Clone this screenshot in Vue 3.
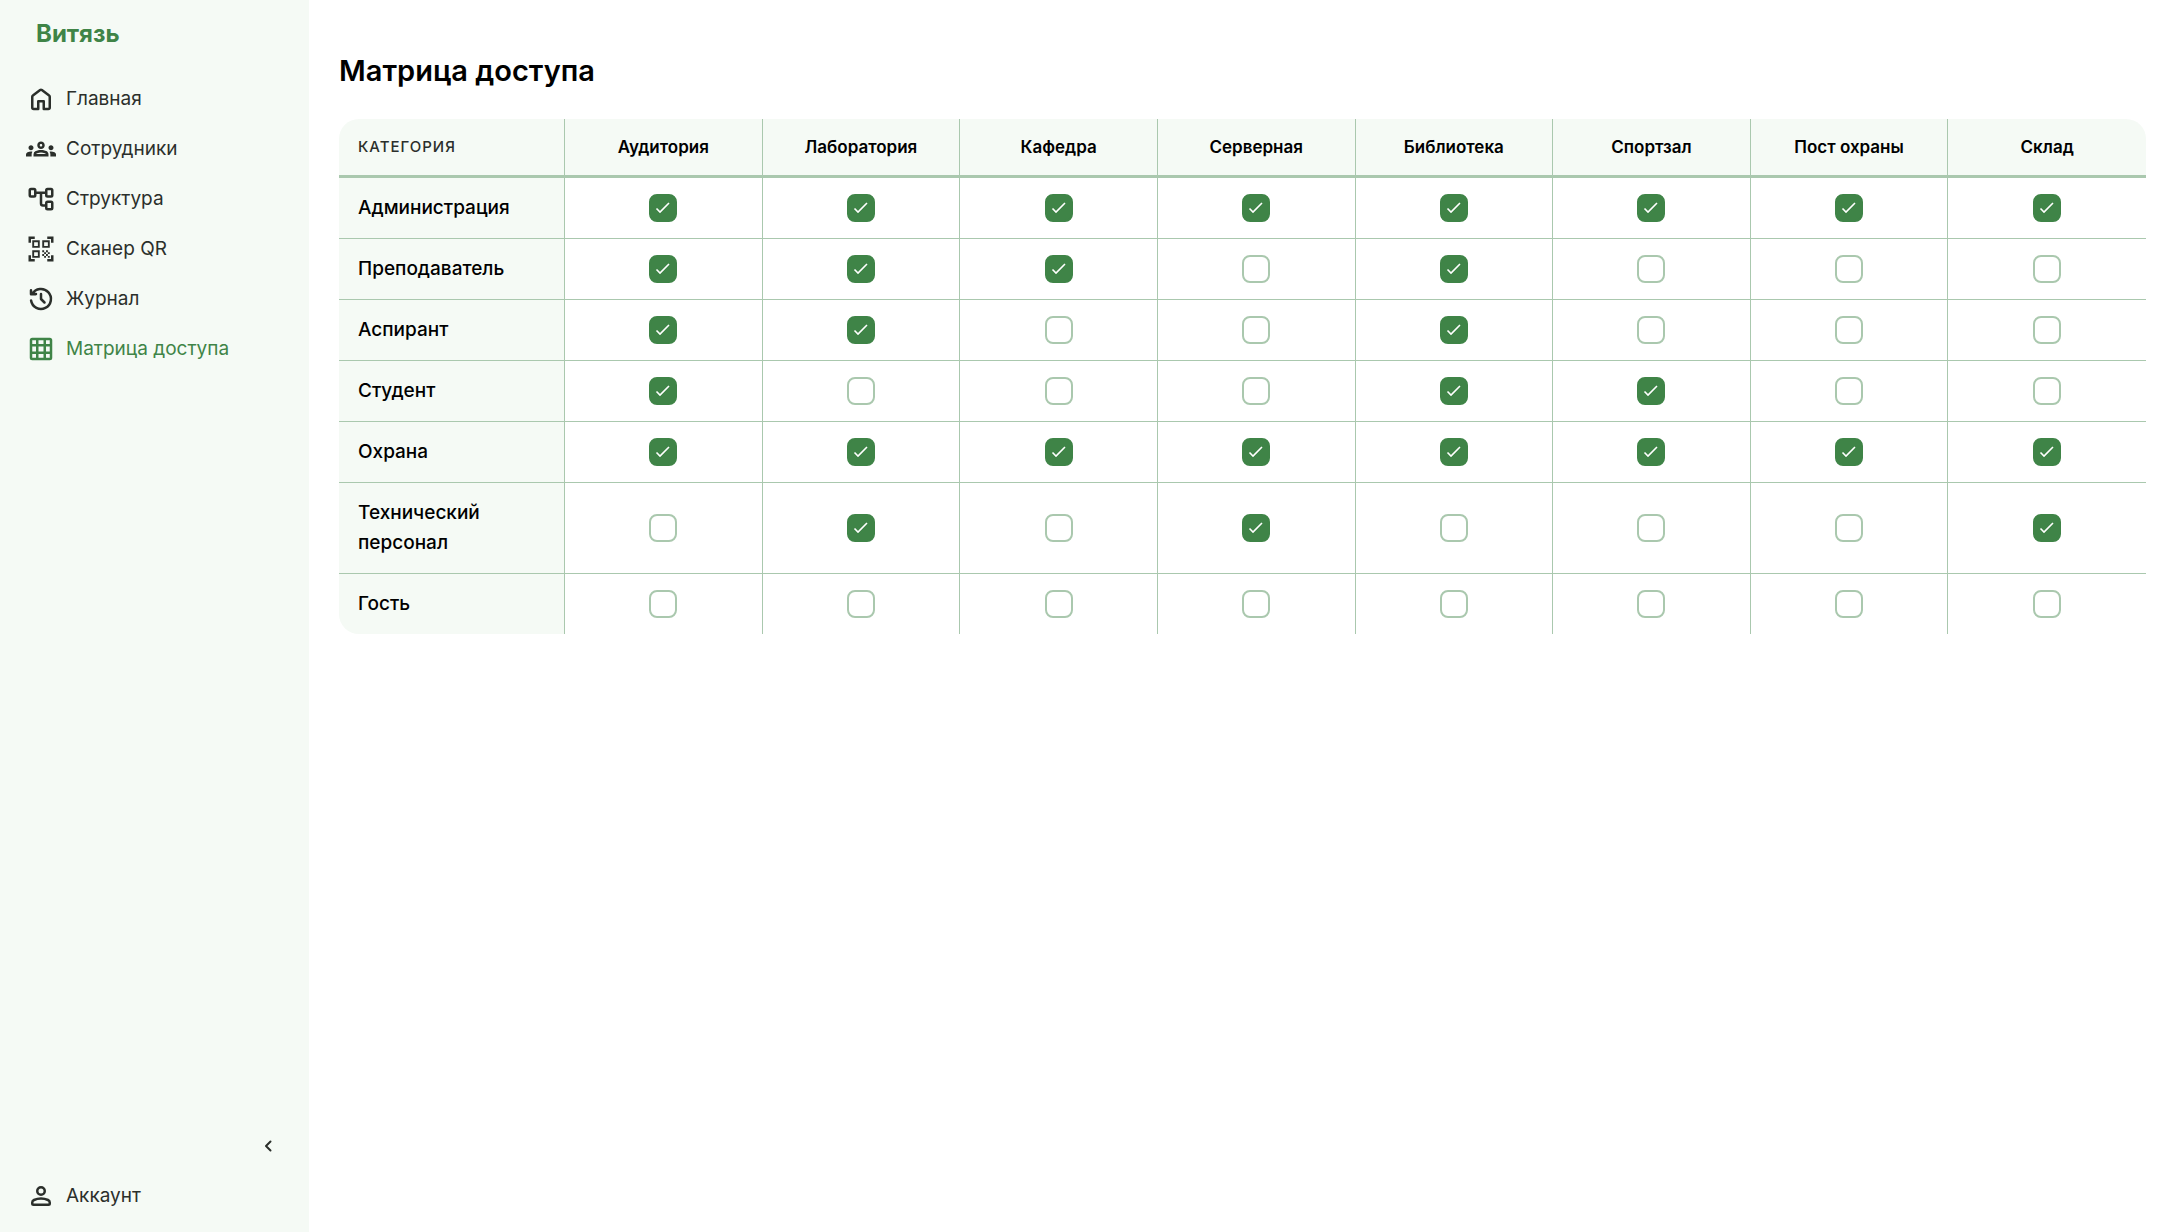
<template>
  <div class="layout">
    <aside class="sidebar">
      <div class="brand">Витязь</div>
      <nav class="menu">
        <a
          v-for="item in menu"
          :key="item.icon"
          href="#"
          class="menu-item"
          :class="{ active: item.icon === activeItem }"
          @click.prevent="activeItem = item.icon"
        >
          <svg class="icon" viewBox="0 0 24 24" aria-hidden="true">
            <path v-if="icons[item.icon].fill" :d="icons[item.icon].fill" fill="currentColor" />
            <path v-if="icons[item.icon].line" :d="icons[item.icon].line" class="line" />
          </svg>
          <span>{{ item.title }}</span>
        </a>
      </nav>
      <button class="collapse-btn" type="button" aria-label="Свернуть меню">
        <svg class="chevron" viewBox="0 0 24 24" aria-hidden="true">
          <path d="M14.5 7.5 10 12l4.5 4.5" class="line" />
        </svg>
      </button>
      <a href="#" class="menu-item" @click.prevent>
        <svg class="icon" viewBox="0 0 24 24" aria-hidden="true">
          <circle cx="12" cy="8" r="3" class="line" />
          <path :d="icons.account.line" class="line" />
        </svg>
        <span>Аккаунт</span>
      </a>
    </aside>

    <main class="content">
      <h1 class="title">Матрица доступа</h1>
      <table class="matrix">
        <thead>
          <tr>
            <th class="corner" scope="col">Категория</th>
            <th v-for="room in rooms" :key="room" scope="col">{{ room }}</th>
          </tr>
        </thead>
        <tbody>
          <tr v-for="row in rows" :key="row.name">
            <th class="category" scope="row">{{ row.name }}</th>
            <td v-for="(room, i) in rooms" :key="room">
              <input
                v-model="row.access[i]"
                type="checkbox"
                class="check"
                :aria-label="`${row.name}: ${room}`"
              />
            </td>
          </tr>
        </tbody>
      </table>
    </main>
  </div>
</template>

<script setup>
import { ref } from 'vue'

const icons = {
  home: {
    line: 'M5 10.2v8.6c0 .7.5 1.2 1.2 1.2H9.8v-6.2h4.4V20h3.6c.7 0 1.2-.5 1.2-1.2v-8.6c0-.4-.2-.8-.5-1L12.7 4.8c-.4-.3-1-.3-1.4 0L5.5 9.2c-.3.2-.5.6-.5 1z'
  },
  staff: {
    fill: 'M4 13c1.1 0 2-.9 2-2s-.9-2-2-2-2 .9-2 2 .9 2 2 2zm1.13 1.1c-.37-.06-.74-.1-1.13-.1-.99 0-1.93.21-2.78.58A2.01 2.01 0 0 0 0 16.43V18h4.5v-1.61c0-.83.23-1.61.63-2.29zM20 13c1.1 0 2-.9 2-2s-.9-2-2-2-2 .9-2 2 .9 2 2 2zm4 3.43c0-.81-.48-1.53-1.22-1.85A6.95 6.95 0 0 0 20 14c-.39 0-.76.04-1.13.1.4.68.63 1.46.63 2.29V18H24v-1.57zm-7.76-2.78C15.07 13.13 13.63 12.75 12 12.75s-3.07.39-4.24.9A2.988 2.988 0 0 0 6 16.39V18h12v-1.61c0-1.18-.68-2.26-1.76-2.74zM8.07 16c.09-.23.13-.39.91-.69.97-.38 1.99-.56 3.02-.56s2.05.18 3.02.56c.77.3.81.46.91.69H8.07zM12 8c.55 0 1 .45 1 1s-.45 1-1 1-1-.45-1-1 .45-1 1-1m0-2c-1.66 0-3 1.34-3 3s1.34 3 3 3 3-1.34 3-3-1.34-3-3-3z'
  },
  structure: {
    line: 'M4 4h2.4a1 1 0 0 1 1 1v4a1 1 0 0 1-1 1H4a1 1 0 0 1-1-1V5a1 1 0 0 1 1-1zM17.2 4H20a1 1 0 0 1 1 1v4a1 1 0 0 1-1 1h-2.8a1 1 0 0 1-1-1V5a1 1 0 0 1 1-1zM17.2 14.2H20a1 1 0 0 1 1 1v4a1 1 0 0 1-1 1h-2.8a1 1 0 0 1-1-1v-4a1 1 0 0 1 1-1zM7.4 7h8.8M12 7v8.6c0 1 .6 1.6 1.6 1.6h2.6'
  },
  qr: {
    fill: 'M9.5 6.5v3h-3v-3h3M11 5H5v6h6V5zm-1.5 9.5v3h-3v-3h3M11 13H5v6h6v-6zm6.5-6.5v3h-3v-3h3M19 5h-6v6h6V5zm-6 8h1.5v1.5H13V13zm1.5 1.5H16V16h-1.5v-1.5zM16 13h1.5v1.5H16V13zm-3 3h1.5v1.5H13V16zm1.5 1.5H16V19h-1.5v-1.5zM16 16h1.5v1.5H16V16zm1.5-1.5H19V16h-1.5v-1.5zm0 3H19V19h-1.5v-1.5zM22 7h-2V4h-3V2h5v5zm0 15v-5h-2v3h-3v2h5zM2 22h5v-2H4v-3H2v5zM2 2v5h2V4h3V2H2z'
  },
  history: {
    line: 'M4.06 13.2A8 8 0 1 0 5 8h3M4 5v3.2h3.6M12 8v4l2.8 2.8'
  },
  matrix: {
    line: 'M5 4h14a1 1 0 0 1 1 1v14a1 1 0 0 1-1 1H5a1 1 0 0 1-1-1V5a1 1 0 0 1 1-1zM9 4v16M15 4v16M4 9h16M4 15h16'
  },
  account: {
    line: 'M5 17.2c0-.9.5-1.6 1.4-2C8.1 14.4 10 14 12 14s3.9.4 5.6 1.2c.9.4 1.4 1.1 1.4 2V18c0 .6-.4 1-1 1H6c-.6 0-1-.4-1-1z'
  }
}

const menu = [
  { icon: 'home', title: 'Главная' },
  { icon: 'staff', title: 'Сотрудники' },
  { icon: 'structure', title: 'Структура' },
  { icon: 'qr', title: 'Сканер QR' },
  { icon: 'history', title: 'Журнал' },
  { icon: 'matrix', title: 'Матрица доступа' }
]
const activeItem = ref('matrix')

const rooms = [
  'Аудитория',
  'Лаборатория',
  'Кафедра',
  'Серверная',
  'Библиотека',
  'Спортзал',
  'Пост охраны',
  'Склад'
]

const toAccess = (mask) => [...mask].map((c) => c === '1')

const rows = ref([
  { name: 'Администрация', access: toAccess('11111111') },
  { name: 'Преподаватель', access: toAccess('11101000') },
  { name: 'Аспирант', access: toAccess('11001000') },
  { name: 'Студент', access: toAccess('10001100') },
  { name: 'Охрана', access: toAccess('11111111') },
  { name: 'Технический персонал', access: toAccess('01010001') },
  { name: 'Гость', access: toAccess('00000000') }
])
</script>

<style>
body {
  margin: 0;
  background: #fff;
}
</style>

<style scoped>
.layout {
  display: flex;
  min-height: 100vh;
  font-family: Inter, 'Noto Sans', sans-serif;
  font-size: 19px;
  line-height: 30px;
  color: #000;
}
.sidebar {
  display: flex;
  flex-direction: column;
  flex: 0 0 309px;
  box-sizing: border-box;
  padding: 19px 26px 11px;
  background: #f5faf5;
  color: #2b2f2b;
}
.brand {
  padding-left: 10px;
  margin-bottom: 25px;
  font-size: 24px;
  font-weight: 700;
  color: #3f8447;
}
.menu {
  display: flex;
  flex-direction: column;
  margin-bottom: auto;
}
.menu-item {
  display: flex;
  align-items: center;
  gap: 10px;
  height: 50px;
  color: inherit;
  text-decoration: none;
}
.menu-item.active {
  color: #3f8447;
}
.icon {
  flex: none;
  width: 30px;
  height: 30px;
}
.line {
  fill: none;
  stroke: currentColor;
  stroke-width: 2;
  stroke-linecap: round;
  stroke-linejoin: round;
}
.collapse-btn {
  display: flex;
  align-items: center;
  justify-content: center;
  align-self: flex-end;
  width: 30px;
  height: 50px;
  padding: 0;
  border: none;
  background: none;
  color: inherit;
  cursor: pointer;
}
.chevron {
  width: 24px;
  height: 24px;
}
.content {
  flex: 1;
  min-width: 0;
  padding: 51px 22px 30px 30px;
}
.title {
  margin: 0 0 28px;
  font-size: 29px;
  line-height: 40px;
  font-weight: 600;
}
.matrix {
  width: 100%;
  table-layout: fixed;
  border-collapse: separate;
  border-spacing: 0;
  border-radius: 20px;
  overflow: hidden;
}
.matrix th,
.matrix td {
  box-sizing: border-box;
  padding: 15px 19px;
  border-right: 1px solid #aac8ae;
  border-bottom: 1px solid #aac8ae;
  text-align: center;
  vertical-align: middle;
}
.matrix th:last-child,
.matrix td:last-child {
  border-right: none;
}
.matrix tbody tr:last-child > * {
  border-bottom: none;
}
.matrix thead th {
  padding: 13px 10px;
  border-bottom-width: 3px;
  background: #f5faf5;
  font-size: 17px;
  font-weight: 600;
}
.matrix thead .corner {
  width: 226px;
  padding-left: 19px;
  color: #2b2f2b;
  font-size: 15px;
  font-weight: 500;
  letter-spacing: 1px;
  text-align: left;
  text-transform: uppercase;
}
.matrix .category {
  background: #f5faf5;
  font-weight: 500;
  text-align: left;
}
.check {
  display: block;
  appearance: none;
  box-sizing: border-box;
  width: 28px;
  height: 28px;
  margin: 0 auto;
  border: 2px solid #aac8ae;
  border-radius: 8px;
  background: #fff;
  cursor: pointer;
}
.check:checked {
  border-color: #3f8447;
  background: #3f8447
    url("data:image/svg+xml,%3Csvg xmlns='http://www.w3.org/2000/svg' viewBox='0 0 24 24' fill='none' stroke='white' stroke-width='1.6'%3E%3Cpath d='M5.500 12.500 9 16l9-9'/%3E%3C/svg%3E")
    center / 24px no-repeat;
}
</style>
